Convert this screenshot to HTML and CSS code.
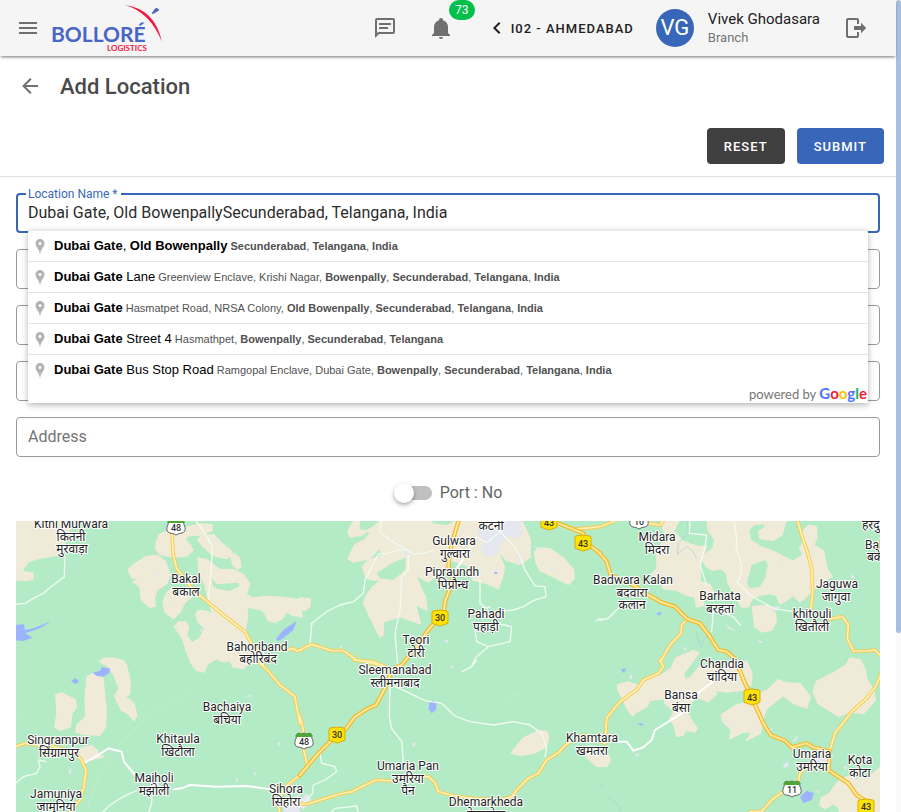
FILE: index.html
```html
<!DOCTYPE html>
<html lang="en">
<head>
<meta charset="utf-8">
<meta name="viewport" content="width=device-width, initial-scale=1">
<title>Add Location</title>
<link rel="stylesheet" href="styles.css">
</head>
<body>
<div class="page">
  <header class="topbar">
    <button class="icon-button" type="button" aria-label="Menu"><svg class="icon" viewBox="0 0 24 24"><path d="M3 6h18v2H3V6m0 5h18v2H3v-2m0 5h18v2H3v-2z"/></svg></button>
    <a class="logo" href="#" aria-label="Bolloré Logistics">
      <svg viewBox="0 0 112 50" width="112" height="50">
        <text class="logo-name" x="-1" y="39">BOLLORÉ</text>
        <text class="logo-sub" x="55" y="48">LOGISTICS</text>
        <path class="logo-arc" d="M73 2Q103 6 110 39Q98 9 73 2z"/>
        <path class="logo-mark" d="M101 10L104 6L106 7z"/>
      </svg>
    </a>
    <div class="topbar-end">
      <button class="icon-button" type="button" aria-label="Messages"><svg class="icon" viewBox="0 0 24 24"><path d="M4 2H20A2 2 0 0 1 22 4V16A2 2 0 0 1 20 18H6L2 22V4A2 2 0 0 1 4 2M4 4V17.2L5.200 16H20V4H4M6 7H18V9H6V7M6 11H15V13H6V11z"/></svg></button>
      <button class="icon-button bell" type="button" aria-label="Notifications"><svg class="icon" viewBox="0 0 24 24"><path d="M21 19V20H3V19L5 17V11C5 7.900 7.030 5.170 10 4.290V4A2 2 0 0 1 12 2A2 2 0 0 1 14 4V4.290C16.970 5.170 19 7.900 19 11V17L21 19M14 21A2 2 0 0 1 12 23A2 2 0 0 1 10 21"/></svg><span class="badge">73</span></button>
      <button class="branch" type="button"><svg class="icon" viewBox="0 0 24 24"><path d="M15.410 16.580L10.830 12L15.410 7.410L14 6L8 12L14 18z"/></svg><span>I02 - AHMEDABAD</span></button>
      <div class="user">
        <span class="avatar">VG</span>
        <div class="user-text"><span class="user-name">Vivek Ghodasara</span><span class="user-role">Branch</span></div>
      </div>
      <button class="icon-button" type="button" aria-label="Log out"><svg class="icon" viewBox="0 0 24 24"><path d="M17 17.250V14H10V10H17V6.750L22.250 12L17 17.250M13 2A2 2 0 0 1 15 4V8H13V4H4V20H13V16H15V20A2 2 0 0 1 13 22H4A2 2 0 0 1 2 20V4A2 2 0 0 1 4 2H13z"/></svg></button>
    </div>
  </header>

  <main class="content">
    <div class="heading">
      <button class="icon-button" type="button" aria-label="Back"><svg class="icon" viewBox="0 0 24 24"><path d="M20 11V13H8L13.500 18.500L12.080 19.920L4.160 12L12.080 4.080L13.500 5.500L8 11H20z"/></svg></button>
      <h1>Add Location</h1>
    </div>
    <div class="actions">
      <button class="button button-dark" type="button">RESET</button>
      <button class="button button-primary" type="submit" form="location-form">SUBMIT</button>
    </div>

    <form class="form" id="location-form">
      <div class="field field-active">
        <label for="location-name">Location Name *</label>
        <input id="location-name" type="text" value="Dubai Gate, Old BowenpallySecunderabad, Telangana, India">
        <div class="suggestions">
          <ul>
            <li><svg class="pin" viewBox="0 0 15 20"><path fill-rule="evenodd" d="M8 2a4.500 4.500 0 0 0-4.500 4.500C3.500 10 7.500 12 7.800 17h.400C8.500 12 12.500 10 12.500 6.500A4.500 4.500 0 0 0 8 2m0 3a1.500 1.500 0 1 1 0 3a1.500 1.500 0 0 1 0-3z"/></svg><span class="query"><b>Dubai Gate</b>, <b>Old Bowenpally</b></span> <b>Secunderabad</b>, <b>Telangana</b>, <b>India</b></li>
            <li><svg class="pin" viewBox="0 0 15 20"><path fill-rule="evenodd" d="M8 2a4.500 4.500 0 0 0-4.500 4.500C3.500 10 7.500 12 7.800 17h.400C8.500 12 12.500 10 12.500 6.500A4.500 4.500 0 0 0 8 2m0 3a1.500 1.500 0 1 1 0 3a1.500 1.500 0 0 1 0-3z"/></svg><span class="query"><b>Dubai Gate</b> Lane</span> Greenview Enclave, Krishi Nagar, <b>Bowenpally</b>, <b>Secunderabad</b>, <b>Telangana</b>, <b>India</b></li>
            <li><svg class="pin" viewBox="0 0 15 20"><path fill-rule="evenodd" d="M8 2a4.500 4.500 0 0 0-4.500 4.500C3.500 10 7.500 12 7.800 17h.400C8.500 12 12.500 10 12.500 6.500A4.500 4.500 0 0 0 8 2m0 3a1.500 1.500 0 1 1 0 3a1.500 1.500 0 0 1 0-3z"/></svg><span class="query"><b>Dubai Gate</b></span> Hasmatpet Road, NRSA Colony, <b>Old Bowenpally</b>, <b>Secunderabad</b>, <b>Telangana</b>, <b>India</b></li>
            <li><svg class="pin" viewBox="0 0 15 20"><path fill-rule="evenodd" d="M8 2a4.500 4.500 0 0 0-4.500 4.500C3.500 10 7.500 12 7.800 17h.400C8.500 12 12.500 10 12.500 6.500A4.500 4.500 0 0 0 8 2m0 3a1.500 1.500 0 1 1 0 3a1.500 1.500 0 0 1 0-3z"/></svg><span class="query"><b>Dubai Gate</b> Street 4</span> Hasmathpet, <b>Bowenpally</b>, <b>Secunderabad</b>, <b>Telangana</b></li>
            <li><svg class="pin" viewBox="0 0 15 20"><path fill-rule="evenodd" d="M8 2a4.500 4.500 0 0 0-4.500 4.500C3.500 10 7.500 12 7.800 17h.400C8.500 12 12.500 10 12.500 6.500A4.500 4.500 0 0 0 8 2m0 3a1.500 1.500 0 1 1 0 3a1.500 1.500 0 0 1 0-3z"/></svg><span class="query"><b>Dubai Gate</b> Bus Stop Road</span> Ramgopal Enclave, Dubai Gate, <b>Bowenpally</b>, <b>Secunderabad</b>, <b>Telangana</b>, <b>India</b></li>
          </ul>
          <div class="powered">powered by <span class="google"><span class="g-blue">G</span><span class="g-red">o</span><span class="g-yellow">o</span><span class="g-blue">g</span><span class="g-green">l</span><span class="g-red">e</span></span></div>
        </div>
      </div>
      <div class="field"><input type="text" aria-label="Field 2"></div>
      <div class="field"><input type="text" aria-label="Field 3"></div>
      <div class="field"><input type="text" aria-label="Field 4"></div>
      <div class="field"><input type="text" aria-label="Address" placeholder="Address"></div>
      <div class="switch-row">
        <input class="switch" type="checkbox" role="switch" id="port">
        <label for="port">Port : No</label>
      </div>
    </form>

    <div class="map">
      <svg viewBox="16 521 864 291" preserveAspectRatio="xMidYMin slice">
        <defs>
          <path id="national-shield" d="M-7 -7Q0 -9 7 -7Q8 -7 8 -5V4Q8 6 6 6L3 7Q0 9 -3 7L-6 6Q-8 6 -8 4V-5Q-8 -7 -7 -7z"/>
          <path id="state-shield" d="M-8 -6L-6 -8L-3 -7L0 -8L3 -7L6 -8L8 -6Q7 -3 9 0Q10 5 6 6Q3 6 0 8Q-3 6 -6 6Q-10 5 -9 0Q-7 -3 -8 -6z"/>
          <path id="state-band" d="M-8 -6L-6 -8L-3 -7L0 -8L3 -7L6 -8L8 -6V-4H-8z"/>
          <g id="highways">
            <g transform="translate(0 1545)"><path d="M515 50L520 120L530 160L570 212L610 250L670 300L735 350L755 385L770 400L790 450M862 405L880 400L890 408L905 405"/></g>
            <g transform="translate(900 1410)"><path d="M0 540L35 523L95 542L130 542L170 570L240 585M820 178L900 170L945 153"/></g>
            <g transform="translate(1800 1545)"><path d="M262 312L245 330L243 355L210 390L190 425L180 440M145 25L180 30L190 18M592 14L605 60L622 110L635 160L638 230L632 290M690 312L728 305L745 330L742 370L760 408L800 408L825 405L842 422"/></g>
            <g transform="translate(0 1980)"><path d="M40 262L75 250L110 255L150 258L220 275L245 300L258 330L252 380L240 420L205 460M780 10L800 28L840 75L885 110L890 140L900 190M840 460L835 440L850 385L900 345"/></g>
            <g transform="translate(900 1980)"><path d="M160 0L220 5L270 25M-50 425L0 432L25 432L60 420L120 402L155 395L185 380L228 360L280 363L340 350L385 350L405 368L415 395L465 408L520 415L600 420L635 410L650 390L685 355L715 340L740 300L775 278L800 252L850 225L915 250M0 170L10 210L10 265L22 315"/></g>
            <g transform="translate(1800 1980)"><path d="M180 0L190 20L175 40L130 60L110 90L60 125L35 155L20 175L15 250M690 270L705 220L755 155L800 115L830 75L845 35M630 310L600 340L590 380L545 398L515 420L485 455L450 455"/></g>
          </g>
          <g id="national">
            <g transform="translate(900 1410)"><path d="M478 145L458 210L450 250L445 290L458 320L448 360L435 395L432 420L420 440L385 480L345 535L305 585L275 600L255 655L228 705L205 715L165 740L135 780L95 810L55 850L0 915M720 140L775 160L820 178L850 190L855 215L900 250"/></g>
            <g transform="translate(1800 1545)"><path d="M0 115L20 140L32 180L100 210L145 240L185 262L225 275L262 312L300 325L330 365L355 405L380 410L405 432L435 505L445 525L470 580L490 625L512 660L555 677L575 697L620 685L640 697L690 710L685 765L745 805L770 840L800 860"/></g>
          </g>
        </defs>
        <rect class="forest" x="-400" y="521" width="1700" height="700"/>
        <g transform="scale(.3333333)">
          <g class="land">
            <g transform="translate(0 1545)">
              <path d="M40 10H230L220 30L195 60L190 110L160 122L120 128L85 140L65 165L75 172L98 175V192L80 196L40 194z"/>
              <path d="M470 80L478 60L500 50L530 40L570 35L600 28L635 30L636 45L610 58L560 62L555 75L570 90L578 105L560 122L520 125L480 118L468 100z"/>
              <path d="M594 75L604 64L640 60L665 85L690 105L698 118L680 130L640 120L610 95zM694 125L706 118L718 130L722 155L712 161L700 150z"/>
              <path d="M385 165L400 150L440 125L470 122L495 140L510 180L500 205L470 225L462 250L465 272L450 276L425 255L420 215L400 200L430 187L396 188z"/>
              <path d="M595 130L620 135L660 165L700 165L730 180L748 205L738 240L760 250L800 245L850 248L900 255L905 305L880 300L860 290L845 310L825 322L805 315L790 285L740 275L742 310L735 340L740 370L755 385L800 425L785 445L745 445L730 460L700 455L690 435L670 440L650 430L622 445L612 470L590 465L575 445L560 410L548 370L525 335L535 322L558 322L565 340L558 360L575 385L600 370L615 340L595 320L588 300L595 287L620 290L640 300L626 255L616 210L598 170z"/>
              <path d="M490 260L500 235L515 220L550 235L570 230L575 245L555 260L540 290L520 310L495 290z"/>
              <path d="M300 440L312 430L340 430L368 438L378 450L390 500L388 535L375 545L400 565L410 600L402 615L385 595L365 585L345 545L358 520L340 475L320 450z"/>
            </g>
            <g transform="translate(900 1410)">
              <path d="M165 145L145 185L150 200L185 195L205 180L210 190L195 210L165 225L145 265L160 275L210 265L235 235L255 255L205 272L188 290L200 325L225 330L250 325L220 350L200 375L192 400L210 440L240 500L248 495L250 455L300 440L360 460L345 400L380 420L375 380L360 350L345 315L340 285L355 320L385 335L440 290L455 270L500 285L520 330L560 340L595 355L610 310L612 290L590 240L620 270L660 282L690 260V210L675 175L660 145z"/>
              <path d="M705 245L720 235L750 238L790 265L820 300L822 325L805 342L770 325L720 300L708 275zM0 385L30 388L28 410L15 420L0 415z"/>
            </g>
            <g transform="translate(1800 1545)">
              <path d="M322 10H560L545 60L520 75L480 70L478 50L500 35L490 25L460 28L445 45L450 75L480 95L520 110L560 130L580 140L610 120L600 100L612 80L610 50L625 32L648 35L650 70L640 90L670 110L680 160L695 185L660 200L640 225L600 260L580 240L560 255L540 265L530 240L510 235L480 240L455 250L445 275L425 275L405 240L385 205L380 175L365 160L340 165L320 155L305 130L315 120L340 100L345 75L325 45z"/>
              <path d="M190 10H240L220 50L250 80L290 95L318 95L300 150L300 200L330 210L340 230L310 250L310 270L290 275L285 245L260 240L230 225L190 220L180 190L158 185V175L172 160L170 110L190 80L200 55L190 45z"/>
              <path d="M458 275L500 272L525 295L528 320L515 345L485 350L465 335z"/>
            </g>
            <g transform="translate(0 1980)">
              <path d="M262 50L285 40L308 55L312 100L318 150L315 200L300 225L250 222L228 215L232 195L258 170L256 110zM168 105L185 100L225 120L228 140L215 160L210 200L180 210L165 200L172 160zM235 290L245 265L275 258L290 270L295 285L310 290L265 300L255 308z"/>
            </g>
            <g transform="translate(900 1980)"><path d="M635 278L670 235L715 213L740 215L745 235L738 260L700 280L660 285zM855 285L925 285L930 300L920 318L890 318L870 300z"/></g>
            <g transform="translate(1800 1980)">
              <path d="M53 75L85 67L120 78L150 50L185 45L215 25L228 -5L280 -28L295 -20L250 40L255 60L270 55L300 20L440 5L455 40L452 75L430 90L380 95L345 90L348 102L325 125L290 110L270 130L260 160L290 205L285 215L255 210L250 225L230 228L225 200L210 175L225 155L195 130V115L150 120L140 140L110 155L98 167L85 150L70 120L55 90z"/>
              <path d="M365 165L410 135L440 130L480 100L505 90L535 60L560 70L600 72L630 110L620 143L580 130L550 105L500 145L490 170L480 220L440 240L460 215L430 215L390 235L395 210L370 185z"/>
              <path d="M640 95L650 65L690 45L740 15L750 -5L780 0L795 30L800 60L820 90L825 120L790 160L750 155L715 168L680 145L655 130zM845 318L810 350L770 360L745 350L715 365L690 400L665 415L660 435L675 445L700 430L715 440L720 456H845z"/>
            </g>
          </g>
          <g class="forest">
            <path transform="translate(0 1545)" d="M635 190L650 208L690 205L715 203L718 213L690 228L655 222L640 215z"/>
            <path transform="translate(900 1410)" d="M182 145H245L225 165L200 180L178 178zM385 145H480L440 165L400 160zM230 310L275 280L318 262L315 300L280 330L240 325z"/>
            <path transform="translate(1800 1545)" d="M440 205L455 150L495 135L503 150L495 190L480 215L450 220z"/>
          </g>
          <g class="urban">
            <path transform="translate(900 1410)" d="M545 150L660 153L668 190L655 205L625 200L600 225L598 250L560 260L540 240L555 215L530 190zM312 235L326 235L325 258L312 255zM655 255L662 252L664 280L654 278zM120 402L132 400L128 412zM30 458L42 460L34 472zM432 510L446 510L440 520zM750 295L765 290L758 305zM705 230L714 232L710 245zM118 535L122 525L130 537z"/>
            <path transform="translate(1800 1545)" d="M520 272L543 275L530 287L515 285zM372 325L408 348L388 342zM472 373L490 380L480 385zM545 130L556 135L548 145zM750 188L758 178L766 190zM248 400L258 395L260 407zM165 168L188 172L175 180z"/>
            <path transform="translate(0 1980)" d="M850 435L900 400L900 456H850zM738 112L750 104L757 109zM830 250L840 245L838 260zM705 365L712 352L714 365zM760 330L768 342L762 348zM205 335L215 318L212 345zM450 370L475 365L480 385L455 390z"/>
            <path transform="translate(900 1980)" d="M448 22L462 15L455 27zM335 250L350 250L342 262zM104 198L118 196L115 206zM128 355L142 340L135 350zM-10 430L20 400L35 420L10 450z"/>
            <path transform="translate(1800 1980)" d="M548 315L565 303L565 320L552 323zM635 275L690 265L700 290L685 320L640 310zM730 320L742 318L738 332zM575 248L592 225L590 240zM85 50L98 42L95 60zM250 160L262 165L258 178zM372 178L390 182L385 190zM103 283L120 280L112 290zM505 210L520 205L512 215zM702 210L715 200L710 218zM648 395L656 385L655 400z"/>
            <path transform="translate(0 1545)" d="M470 178L480 174L480 185zM508 272L522 274L515 280zM600 340L608 346L602 352zM630 80L640 82L636 92zM605 165L615 168L610 173z"/>
          </g>
          <g class="water">
            <path transform="translate(0 1545)" d="M40 330L72 328L75 345L100 340L155 318L120 340L75 355L98 368L70 378L40 375zM828 372L850 345L890 318L880 345L850 370L835 378z"/>
            <path transform="translate(0 1980)" d="M278 38L300 32L305 22L330 25L328 38L310 50L290 48zM213 62L228 55L238 66L225 72z"/>
            <path transform="translate(900 1980)" d="M388 128L398 121L410 130L408 150L395 160L386 148z"/>
            <path transform="translate(1800 1980)" d="M600 410L620 392L642 400L635 420L610 430zM62 28L78 25L72 40zM110 188L132 192L125 197z"/>
            <path transform="translate(1800 1545)" d="M168 295L185 290L180 303z"/>
            <path transform="translate(900 1410)" d="M583 306H592V312H583z"/>
          </g>
          <path class="stream" transform="translate(1800 1545)" d="M262 18L265 50L235 85L232 120L260 95L280 110L290 130M290 350L295 375L305 395M325 360L310 375L305 395"/>
          <path class="stream" transform="translate(1800 1980)" d="M25 412L50 430L62 452M0 375L8 380"/>
          <g class="ridge">
            <path transform="translate(0 1980)" d="M575 92Q430 160 340 275Q280 360 262 450M40 172L85 155"/>
            <path transform="translate(900 1980)" d="M620 118L660 100"/>
          </g>
          <g class="lane">
            <path transform="translate(0 1545)" d="M195 125L193 185L160 210L130 235L100 250L75 265L40 268M585 14L615 55L637 95L632 180L625 255"/>
            <path transform="translate(900 1410)" d="M245 145L240 185L270 210L318 238L340 252L380 248L400 240M318 238L285 242L265 250L235 252L215 290L195 330L190 370L160 395L120 405L80 425L35 460L30 525M325 255V300L305 320L300 420L285 490L293 585M495 262L530 200L560 218L600 185M600 185L640 225L660 260L675 300L705 348L735 350L738 380L700 392L670 410L640 420L600 425M540 330V400L560 415L570 410M525 480L530 515L565 530L630 515L635 470L600 462M565 530L525 565L515 590M888 452L902 446"/>
            <path transform="translate(1800 1545)" d="M402 14L410 70L408 100L425 150L420 190L410 200L450 240L520 280L580 290M270 14L268 55L320 60L315 95L300 150L320 210M0 315L25 310L55 280M340 290L335 350M345 285L400 305L420 330"/>
            <path transform="translate(0 1980)" d="M40 375L70 350L110 340L120 320L115 300L138 305M305 460L330 435L370 410L410 392M455 410V430L445 460"/>
            <path transform="translate(900 1980)" d="M530 0L515 20L487 35M285 80L330 100L375 122L425 130L465 168L510 185L580 195L640 185L690 195L725 220L740 265L735 290M270 70L268 170L275 205L305 245L310 305M60 280L65 310L105 320L110 335L75 360L40 375L38 400L0 440M90 460L105 445L170 438L175 460"/>
          </g>
          <g class="lane lane-wide">
            <path transform="translate(0 1980)" d="M255 308L295 285L325 265L365 275L372 305L405 345M520 388L545 385L570 375L650 380L740 378L810 388"/>
            <path transform="translate(900 1410)" d="M472 292L497 258"/>
            <path transform="translate(1800 1980)" d="M50 245L80 245L100 272L130 262L155 240L165 210L245 160M275 120L305 90L340 65"/>
          </g>
          <use class="road-edge" href="#highways"/>
          <use class="road-core" href="#highways"/>
          <use class="national-edge" href="#national"/>
          <use class="national-core" href="#national"/>
        </g>

        <g class="shield-national">
          <use href="#national-shield" x="440" y="618"/><text x="440" y="621">30</text>
          <use href="#national-shield" x="583" y="543"/><text x="583" y="547">43</text>
          <use href="#national-shield" x="549" y="522"/><text x="549" y="526">43</text>
          <use href="#national-shield" x="752" y="697"/><text x="752" y="701">43</text>
          <use href="#national-shield" x="337" y="735"/><text x="337" y="738">30</text>
          <use href="#national-shield" x="866" y="807"/><text x="866" y="810">43</text>
        </g>
        <g class="shield-state">
          <g transform="translate(176 527)"><use href="#state-shield"/><use class="shield-band" href="#state-band"/><text y="4">48</text></g>
          <g transform="translate(639 521)"><use href="#state-shield"/><text y="4">10</text></g>
          <g transform="translate(304 741)"><use href="#state-shield"/><use class="shield-band" href="#state-band"/><text y="4">48</text></g>
          <g transform="translate(792 789)"><use href="#state-shield"/><use class="shield-band" href="#state-band"/><text y="4">11</text></g>
        </g>
        <g class="labels">
          <text x="71" y="528">Kitni Murwara</text><text x="71" y="541">कितनी</text><text x="72" y="553">मुरवाड़ा</text>
          <text x="186" y="583">Bakal</text><text x="186" y="596">बकाल</text>
          <text x="257" y="651">Bahoriband</text><text x="258" y="663">बहोरिबंद</text>
          <text x="491" y="530">कटनी</text>
          <text x="454" y="545">Gulwara</text><text x="455" y="558">गुल्वारा</text>
          <text x="452" y="576">Pipraundh</text><text x="453" y="589">पिप्रौन्ध</text>
          <text x="486" y="618">Pahadi</text><text x="486" y="631">पहाड़ी</text>
          <text x="416" y="644">Teori</text><text x="416" y="657">टोरी</text>
          <text x="395" y="674">Sleemanabad</text><text x="395" y="687">स्लीमनाबाद</text>
          <text x="657" y="541">Midara</text><text x="657" y="554">मिदरा</text>
          <text x="633" y="584">Badwara Kalan</text><text x="632" y="597">बदवारा</text><text x="632" y="609">कलान</text>
          <text x="720" y="600">Barhata</text><text x="720" y="613">बरहता</text>
          <text x="837" y="588">Jaguwa</text><text x="836" y="601">जागुवा</text>
          <text x="812" y="618">khitouli</text><text x="812" y="631">खितौली</text>
          <text class="label-start" x="862" y="529">हरदुआ</text>
          <text class="label-start" x="865" y="549">Bakeli</text><text class="label-start" x="867" y="561">बकेली</text>
          <text x="722" y="668">Chandia</text><text x="722" y="681">चांदिया</text>
          <text x="681" y="699">Bansa</text><text x="681" y="712">बंसा</text>
          <text x="227" y="711">Bachaiya</text><text x="227" y="724">बचिया</text>
          <text x="178" y="743">Khitaula</text><text x="178" y="756">खिटौला</text>
          <text x="58" y="744">Singrampur</text><text x="59" y="757">सिंग्रामपुर</text>
          <text x="154" y="782">Majholi</text><text x="154" y="795">मझोली</text>
          <text x="56" y="798">Jamuniya</text><text x="56" y="811">जामुनिया</text>
          <text x="286" y="793">Sihora</text><text x="286" y="806">सिहोरा</text>
          <text x="408" y="770">Umaria Pan</text><text x="408" y="783">उमरिया</text><text x="408" y="795">पैन</text>
          <text x="486" y="806">Dhemarkheda</text><text x="486" y="819">ढेमरखेड़ा</text>
          <text x="592" y="742">Khamtara</text><text x="592" y="755">खमतरा</text>
          <text x="812" y="758">Umaria</text><text x="812" y="771">उमरिया</text>
          <text x="860" y="764">Kota</text><text x="860" y="777">कोटा</text>
        </g>
      </svg>
    </div>
  </main>
</div>
<div class="scroll-track"><div class="scroll-thumb"></div></div>
</body>
</html>
```
FILE: styles.css
```css
* { box-sizing: border-box; }

body {
  margin: 0;
  height: 100vh;
  display: grid;
  grid-template-columns: minmax(0, 1fr) 5px;
  overflow: hidden;
  background: #fff;
  color: #212121;
  font-family: Roboto, "Liberation Sans", sans-serif;
}

button, input { font-family: inherit; }
button { border: 0; background: none; padding: 0; cursor: pointer; }

.page { display: flex; flex-direction: column; min-height: 0; }

.icon { display: block; width: 24px; height: 24px; fill: currentColor; }
.icon-button { position: relative; color: #6f6f6f; }

/* Top bar */
.topbar {
  display: flex;
  align-items: center;
  flex: none;
  height: 56px;
  padding: 0 28px 0 16px;
  background: #f5f5f5;
  box-shadow: 0 2px 3px -1px rgba(0, 0, 0, .55);
  position: relative;
}
.logo { margin-left: 12px; height: 50px; }
.logo svg { display: block; overflow: visible; }
.logo-name { font: 700 21px Lato, sans-serif; fill: #4866c9; }
.logo-sub { font: 700 8px Lato, sans-serif; fill: #f5173f; }
.logo-arc { fill: #f5173f; }
.logo-mark { fill: #4866c9; stroke: #4866c9; stroke-width: 2px; stroke-linejoin: round; }
.topbar-end { display: flex; align-items: center; margin-left: auto; }
.bell { margin-left: 32px; }
.badge {
  position: absolute;
  left: 20px;
  top: -16px;
  width: 26px;
  height: 20px;
  border-radius: 10px;
  background: #00c04b;
  color: #fff;
  font-size: 12px;
  line-height: 20px;
}
.branch {
  display: flex;
  align-items: center;
  gap: 2px;
  margin-left: 32px;
  color: #212121;
  font-size: 13px;
  font-weight: 500;
  letter-spacing: 1px;
}
.user { display: flex; align-items: center; gap: 14px; margin: 0 24px 0 22px; }
.avatar {
  width: 38px;
  height: 38px;
  border-radius: 50%;
  background: #3867ba;
  color: #fff;
  font-size: 22px;
  line-height: 38px;
  text-align: center;
}
.user-text { display: flex; flex-direction: column; }
.user-name { font-size: 15px; line-height: 19px; }
.user-role { font-size: 13px; line-height: 18px; color: #757575; }

/* Heading and actions */
.content { flex: 1; min-height: 0; display: flex; flex-direction: column; }
.heading { display: flex; align-items: center; gap: 18px; padding: 14px 18px 0; height: 46px; }
h1 { margin: 0; padding-top: 2px; font-size: 22px; line-height: 30px; font-weight: 500; color: #4a4a4a; }
.actions {
  display: flex;
  justify-content: flex-end;
  gap: 12px;
  padding: 26px 12px 12px;
  border-bottom: 1px solid #e0e0e0;
}
.button {
  height: 36px;
  padding: 0 17px;
  border-radius: 4px;
  color: #fff;
  font-size: 13px;
  font-weight: 500;
  letter-spacing: 1px;
}
.button-dark { background: #3f3f3f; }
.button-primary { background: #3867ba; }

/* Form */
.form { display: flex; flex-direction: column; gap: 16px; padding: 16px 16px 0; }
.field { position: relative; }
.field input {
  display: block;
  width: 100%;
  height: 40px;
  padding: 0 11px 2px;
  border: 1px solid #9a9a9a;
  border-radius: 4px;
  outline: 0;
  background: #fff;
  color: #2c2c2c;
  font-size: 16px;
}
.field input::placeholder { color: #757575; opacity: 1; }
.field-active input { padding: 0 10px 2px; border: 2px solid #3867ba; }
.field-active > label {
  position: absolute;
  left: 10px;
  top: -7px;
  padding: 0 3px 0 2px;
  background: #fff;
  color: #3867ba;
  font-size: 12px;
  line-height: 16px;
}

.suggestions {
  position: absolute;
  z-index: 2;
  left: 12px;
  right: 12px;
  top: 37px;
  background: #fff;
  border-radius: 2px;
  box-shadow: 0 2px 6px rgba(0, 0, 0, .3);
  color: #515151;
  font: 11px/30px "Liberation Sans", Arial, sans-serif;
}
.suggestions ul { list-style: none; margin: 0; padding: 0; }
.suggestions li {
  height: 31px;
  padding: 0 4px;
  border-top: 1px solid #e6e6e6;
  white-space: nowrap;
  overflow: hidden;
}
.query { color: #000; font-size: 13px; }
.pin { width: 15px; height: 20px; margin-right: 7px; vertical-align: middle; fill: #b3b3b3; }
.powered {
  height: 18px;
  padding-right: 1px;
  text-align: right;
  color: #757575;
  font: 13px/16px Lato, sans-serif;
}
.google { font-size: 15px; font-weight: 700; }
.g-blue { color: #4d73ff; }
.g-red { color: #ee1c3a; }
.g-yellow { color: #fbc400; }
.g-green { color: #10b35a; }

/* Switch */
.switch-row {
  display: flex;
  align-items: center;
  justify-content: center;
  gap: 8px;
  height: 40px;
  color: #666;
  font-size: 16px;
}
.switch-row label { padding-bottom: 2px; }
.switch {
  appearance: none;
  position: relative;
  width: 35px;
  height: 14px;
  margin: 0 0 0 3px;
  border-radius: 7px;
  background: #c0c0c0;
}
.switch::before {
  content: "";
  position: absolute;
  left: -3px;
  top: -3px;
  width: 20px;
  height: 20px;
  border-radius: 50%;
  background: #fff;
  box-shadow: 0 2px 4px rgba(0, 0, 0, .35);
}

/* Map */
.map { flex: 1; min-height: 0; margin: 8px 16px 0; overflow: hidden; }
.map svg { display: block; width: 100%; height: 100%; }
.forest { fill: #b2ebc6; }
.land { fill: #f0ead8; stroke: #f0ead8; stroke-width: 6; stroke-linejoin: round; }
.urban { fill: #e4e7ee; }
.water { fill: #9cb4ff; }
.stream, .ridge, .lane, .road-edge, .road-core, .national-edge, .national-core {
  fill: none;
  stroke-linejoin: round;
  stroke-linecap: round;
}
.stream { stroke: #a5cde0; stroke-width: 2; }
.ridge { stroke: #c6ecc9; stroke-width: 3; }
.lane { stroke: #f2faf3; stroke-width: 4; }
.lane-wide { stroke: #fff; stroke-width: 6; }
.road-edge { stroke: #f5cd55; stroke-width: 11; }
.road-core { stroke: #fff0b5; stroke-width: 5; }
.national-edge { stroke: #f3b928; stroke-width: 13; }
.national-core { stroke: #ffe99c; stroke-width: 6; }
.shield-national use { fill: #fee300; stroke: #d9ad0c; }
.shield-state use { fill: #fff; stroke: #666; }
.shield-state .shield-band { fill: #4ca832; stroke: none; }
.map text { text-anchor: middle; font-family: Roboto, "Noto Sans", "Noto Sans Devanagari", sans-serif; }
.shield-national text, .shield-state text { font-size: 9px; font-weight: 500; fill: #333; }
.labels text {
  font-size: 12px;
  fill: #222;
  stroke: #fff;
  stroke-width: 2px;
  stroke-linejoin: round;
  paint-order: stroke;
}
.labels .label-start { text-anchor: start; }

/* Page scroll indicator */
.scroll-track { background: #fafafa; }
.scroll-thumb { height: 78%; border-radius: 3px; background: #a7bfe1; }
```
